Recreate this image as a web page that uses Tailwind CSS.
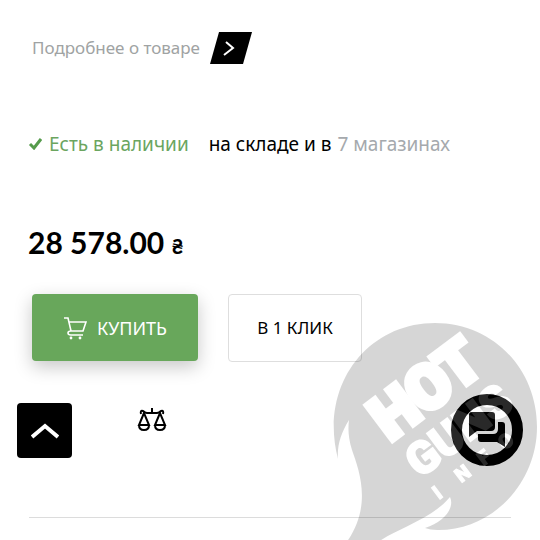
<!DOCTYPE html>
<html lang="ru">
<head>
    <meta charset="UTF-8">
    <meta name="viewport" content="width=device-width, initial-scale=1.0">
    <title>Товар</title>
    <script src="https://cdn.jsdelivr.net/npm/@tailwindcss/browser@4"></script>
</head>

<body class="relative min-h-screen overflow-x-hidden bg-white font-['Noto_Sans',sans-serif] text-black">
    <main class="px-7 pt-8">
        <a href="#" class="flex items-center gap-[10px] pl-1 text-[17px] leading-8 text-[#a0a3a3]">
            <span>Подробнее о товаре</span>
            <svg class="h-8 w-[42px]" viewBox="0 0 42 32">
                <path d="M9 0H42L33 32H0Z" fill="#000"/>
                <path d="M16 10L23 16L14 23" fill="none" stroke="#fff" stroke-width="2"/>
            </svg>
        </a>

        <div class="mt-16 flex items-center text-[19px] leading-8 whitespace-nowrap">
            <svg class="mr-[7px] h-3 w-[14px]" viewBox="0 0 14 12" fill="none" stroke="#559b4b" stroke-width="3">
                <path d="M2 6L6 10L13 1"/>
            </svg>
            <span class="text-[#6ba55f]">Есть в наличии</span>
            <span class="ml-5">на складе и в</span>
            <a href="#" class="ml-[6px] text-[#a5a9ad]">7 магазинах</a>
        </div>

        <p class="mt-16 font-['Lato','Noto_Sans',sans-serif] text-[30px] leading-9 font-bold">28 578.00 <span class="text-xl">₴</span></p>

        <div class="mt-[34px] flex gap-[30px] pl-1">
            <button class="flex h-[67px] w-[166px] items-center justify-center gap-[10px] rounded bg-[#68a75b] text-lg text-white shadow-[0_6px_18px_rgba(0,0,0,0.22)]">
                <svg class="h-6 w-6" viewBox="0 0 24 24" fill="none" stroke="#fff" stroke-width="1.6">
                    <path d="M1 2H5L8 15H20L23 6H6M8 15Q5 15 5 17T8 19H20"/>
                    <circle cx="8" cy="22" r="1.4" fill="#fff" stroke="none"/>
                    <circle cx="17" cy="22" r="1.4" fill="#fff" stroke="none"/>
                </svg>
                КУПИТЬ
            </button>
            <button class="h-[68px] w-[134px] rounded border border-[#dedede] text-[17px]">В 1 КЛИК</button>
        </div>

        <div class="mt-11 flex pl-[109px]">
            <button aria-label="Сравнить">
                <svg class="h-7 w-[30px]" viewBox="0 0 30 28" fill="none" stroke="#000" stroke-width="2">
                    <path d="M15 2V8M4 8Q3 4 6 5Q8 7 10 7H20Q22 7 24 5Q27 4 26 8"/>
                    <path d="M7 7L2 19H12ZM23 7L18 19H28Z"/>
                    <path d="M2 19Q2 24 7 24T12 19M18 19Q18 24 23 24T28 19"/>
                </svg>
            </button>
        </div>

        <hr class="mt-[83px] mr-px ml-px border-[#dcdcdc]">
    </main>

    <!-- back to top -->
    <button aria-label="Наверх" class="absolute top-[403px] left-[17px] flex h-[55px] w-[55px] items-center justify-center rounded bg-black">
        <svg class="h-4 w-7" viewBox="0 0 28 16" fill="none" stroke="#fff" stroke-width="4">
            <path d="M1 14L14 3L27 14"/>
        </svg>
    </button>

    <!-- chat -->
    <button aria-label="Чат" class="absolute top-[394px] right-[17px] h-[72px] w-[72px]">
        <svg viewBox="0 0 72 72">
            <circle cx="36" cy="36" r="30.5" fill="#fff" stroke="#000" stroke-width="11"/>
            <path d="M21 18H41Q44 18 44 21V33Q44 37 40 37H26L18 43V21Q18 18 21 18Z"/>
            <path d="M47 28H51Q54 28 54 31V53L46 48H30Q27 48 27 45V40H42Q47 40 47 35Z"/>
        </svg>
    </button>

    <!-- watermark -->
    <svg class="pointer-events-none absolute top-[315px] right-0 h-[225px] w-[215px]" viewBox="0 0 215 225">
        <defs>
            <g id="brand" font-family="'Roboto',sans-serif" font-weight="900" stroke-linejoin="miter">
                <text transform="translate(65 127) rotate(-37)" font-size="61" stroke-width="6">HOT</text>
                <text transform="translate(95 164) rotate(-37)" font-size="45" stroke-width="2">GUNS</text>
                <text transform="translate(114 185) rotate(-37)" font-size="20" x="0 28 56 82">INFO</text>
            </g>
            <mask id="cut">
                <rect width="215" height="225" fill="#fff"/>
                <use href="#brand" fill="#000" stroke="#000"/>
            </mask>
        </defs>
        <g mask="url(#cut)" fill="#000" fill-opacity="0.16">
            <path d="M13 144C-6 72 41 8 110 8C168 8 212 54 212 112C212 169 166 216 112 215Q105 215 100 213C119 207 130 193 125 182C106 205 70 214 52 228H21C48 191 34 155 27 135C23 122 23 113 24 105C16 118 12 130 13 144Z"/>
        </g>
        <use href="#brand" fill="#fff" stroke="#fff" opacity="0.16"/>
    </svg>
</body>
</html>
